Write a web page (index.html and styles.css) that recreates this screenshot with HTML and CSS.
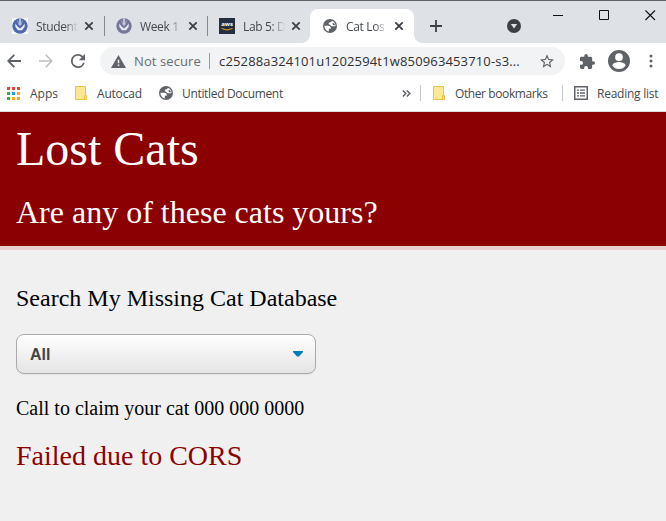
FILE: index.html
```html
<!DOCTYPE html>
<html lang="en">
<head>
<meta charset="utf-8">
<title>Cat Lost and Found</title>
<link rel="stylesheet" href="styles.css">
</head>
<body>
<svg class="defs" width="0" height="0">
  <symbol id="close" viewBox="0 0 10 10"><path d="M1.300 1.300l7.400 7.400M8.700 1.300L1.300 8.700" stroke="#3c4043" stroke-width="1.800"/></symbol>
  <symbol id="globe" viewBox="0 0 20 20"><circle cx="10" cy="10" r="10" fill="#5f6368"/><path d="M2 9.800h5.500c2.600 0 4 1.500 3.700 4.300H8.300v3.700C4.500 17 2 14 2 9.800z" fill="#fff"/><path d="M12.500 2.500C15.800 3.600 18 6.500 18 10c-1 .7-3.500.6-5 .3-1.800-.4-2.200-2-3.800-2.500-1.500-.5-1.500-2.500.2-2.800 1.600-.2 2.900-.6 3.100-2.500z" fill="#fff"/><path d="M14 5.500c1.500.4 3 2 3.500 3.500-1.500 0-3-.2-3.600-1.200-.5-.8-.4-1.500.1-2.300z" fill="#5f6368"/></symbol>
  <symbol id="logo" viewBox="0 0 16 16"><circle cx="8" cy="8" r="7.700" fill="currentColor"/><path d="M3.300 5.500v3.200L6 12.300h4l2.700-3.600V5.500L10.500 8.500 8 10.500 5.500 8.500z" fill="#e9ecf7"/><path d="M8 .5v7" stroke="#eef0fa" stroke-width="1.300"/><path d="M5.500 2.500L7 7M10.500 2.500L9 7" stroke="#aab5da" stroke-width=".8"/></symbol>
  <symbol id="folder" viewBox="0 0 12 14"><path d="M.5.500h10v9h1v4H.5z" fill="#ffe793" stroke="#e9c34a"/><path d="M9.500 13V9.700h2" fill="none" stroke="#e9c34a"/></symbol>
</svg>

<div class="tabstrip">
  <div class="tab first"><svg class="favicon boxed blue"><use href="#logo"/></svg><span class="title">Student</span><svg class="close"><use href="#close"/></svg></div>
  <div class="tab"><svg class="favicon grey"><use href="#logo"/></svg><span class="title">Week 1</span><svg class="close"><use href="#close"/></svg></div>
  <div class="tab last"><span class="favicon aws">aws<svg viewBox="0 0 12 3"><path d="M.5.500Q6 3.500 11.500.500" fill="none" stroke="#f59b23"/></svg></span><span class="title">Lab 5: D</span><svg class="close"><use href="#close"/></svg></div>
  <div class="tab active"><svg class="favicon globe"><use href="#globe"/></svg><span class="title">Cat Los</span><svg class="close"><use href="#close"/></svg></div>
  <svg class="newtab" viewBox="0 0 12 12"><path d="M6 0v12M0 6h12" stroke="#3c4043" stroke-width="1.800"/></svg>
  <svg class="search-tabs" viewBox="0 0 14 14"><circle cx="7" cy="7" r="7" fill="#3c4043"/><path d="M3.800 5h6.400L7 9.500z" fill="#dee1e6"/></svg>
  <div class="window-controls">
    <svg viewBox="0 0 11 11"><path d="M0 5.500h10" stroke="#111"/></svg>
    <svg viewBox="0 0 11 11"><path d="M.5.500h9v9h-9z" fill="none" stroke="#111"/></svg>
    <svg viewBox="0 0 11 11"><path d="M.5.500l9.500 9.500M10 .5L.5 10" stroke="#111" stroke-width="1.100"/></svg>
  </div>
</div>

<div class="toolbar">
  <svg class="back" viewBox="0 0 14 14"><path d="M14 7H1.500M7.300.800L1.200 7l6.100 6.200" fill="none" stroke="#5f6368" stroke-width="1.800"/></svg>
  <svg class="forward" viewBox="0 0 14 14"><path d="M0 7h12.500M6.700.800L12.800 7l-6.100 6.200" fill="none" stroke="#bdbfc1" stroke-width="1.600"/></svg>
  <svg class="reload" viewBox="4 4 16 16"><path fill="#5f6368" d="M17.650 6.350A7.960 7.960 0 0 0 12 4a8 8 0 1 0 7.730 10h-2.080A6 6 0 1 1 12 6c1.660 0 3.140.690 4.220 1.780L13 11h7V4z"/></svg>
  <div class="address">
    <svg class="warning" viewBox="0 0 15 13"><path d="M7.500 0L15 13H0z" fill="#5f6368"/><path d="M7.500 4.700v3.600M7.500 9.500v1.600" stroke="#f1f3f4" stroke-width="1.500"/></svg>
    <span class="security">Not secure</span>
    <span class="url">c25288a324101u1202594t1w850963453710-s3...</span>
    <svg class="star" viewBox="2 2 20 19"><path fill="#5f6368" d="M22 9.240l-7.190-.620L12 2 9.190 8.630 2 9.240l5.460 4.730L5.820 21 12 17.270 18.180 21l-1.630-7.030zM12 15.400l-3.760 2.270 1-4.280-3.320-2.880 4.380-.380L12 6.100l1.710 4.040 4.380.380-3.320 2.880 1 4.280z"/></svg>
  </div>
  <svg class="puzzle" viewBox="2 1 21 21"><path fill="#5f6368" d="M20.500 11H19V7a2 2 0 0 0-2-2h-4V3.500a2.500 2.500 0 0 0-5 0V5H4a2 2 0 0 0-2 2v3.800h1.500a2.700 2.700 0 0 1 0 5.400H2V20c0 1.100.9 2 2 2h3.800v-1.500a2.700 2.700 0 0 1 5.400 0V22H17a2 2 0 0 0 2-2v-4h1.500a2.500 2.500 0 0 0 0-5z"/></svg>
  <svg class="profile" viewBox="2 2 20 20"><path fill="#5f6368" d="M12 2a10 10 0 1 0 0 20 10 10 0 0 0 0-20zm0 3a3.500 3.500 0 1 1 0 7 3.500 3.500 0 0 1 0-7zm0 14.200A7.200 7.200 0 0 1 6 16c0-2 4-3.100 6-3.100s6 1.100 6 3.100a7.200 7.200 0 0 1-6 3.200z"/></svg>
  <svg class="more" viewBox="0 0 4 14"><g fill="#5f6368"><circle cx="2" cy="2" r="1.500"/><circle cx="2" cy="7" r="1.500"/><circle cx="2" cy="12" r="1.500"/></g></svg>
</div>

<div class="bookmarks">
  <svg class="apps" viewBox="0 0 13 13"><path fill="#ea4335" d="M0 0h3v3H0zM5 0h3v3H5zM10 0h3v3h-3z"/><path fill="#34a853" d="M0 5h3v3H0zM0 10h3v3H0z"/><path fill="#1a9cf0" d="M5 5h3v3H5z"/><path fill="#fbad08" d="M10 5h3v3h-3zM5 10h3v3H5zM10 10h3v3h-3z"/></svg>
  <span class="label apps-label">Apps</span>
  <svg class="folder"><use href="#folder"/></svg>
  <span class="label autocad">Autocad</span>
  <svg class="globe"><use href="#globe"/></svg>
  <span class="label untitled">Untitled Document</span>
  <svg class="overflow" viewBox="0 0 9 7"><path d="M.8.500l3 3-3 3M4.800.500l3 3-3 3" fill="none" stroke="#5f6368" stroke-width="1.500"/></svg>
  <div class="group other">
    <svg class="folder"><use href="#folder"/></svg>
    <span class="label">Other bookmarks</span>
  </div>
  <div class="group reading">
    <svg class="list" viewBox="0 0 14 14"><path d="M.75.750h12.500v12.500H.75z" fill="none" stroke="#5f6368" stroke-width="1.500"/><path d="M3 4.200h2M6 4.200h5M3 7h2M6 7h5M3 9.800h2M6 9.800h5" stroke="#5f6368" stroke-width="1.300"/></svg>
    <span class="label">Reading list</span>
  </div>
</div>

<header class="hero">
  <h1>Lost Cats</h1>
  <h2>Are any of these cats yours?</h2>
</header>
<main>
  <h3>Search My Missing Cat Database</h3>
  <div class="select" role="combobox"><span>All</span><svg viewBox="0 0 10 6"><path d="M0 0h10v1L6 5.500H4L0 1z" fill="#007db8"/></svg></div>
  <p class="call">Call to claim your cat 000 000 0000</p>
  <p class="error">Failed due to CORS</p>
</main>
</body>
</html>
```
FILE: styles.css
```css
* { box-sizing: border-box; }
html, body { margin: 0; height: 100%; overflow: hidden; }
body {
  background: #f0f0f0;
  font-family: "Liberation Serif", "Times New Roman", serif;
  color: #000;
}
svg { display: block; flex: none; }
.defs { position: absolute; }

.tabstrip, .toolbar, .bookmarks {
  display: flex;
  align-items: center;
  font-family: "Open Sans", "Noto Sans", sans-serif;
  font-size: 12px;
  white-space: nowrap;
}

/* Tab strip */
.tabstrip {
  height: 43px;
  padding-top: 9px;
  background: #dee1e6;
  box-shadow: inset 0 1px #5f6368;
}
.tab {
  display: flex;
  align-items: center;
  width: 103px;
  height: 34px;
  padding-left: 12px;
  background: linear-gradient(#85888c, #85888c) right 7px / 1px 20px no-repeat;
  flex: none;
}
.tab.first { width: 105px; }
.tab.last { background: none; width: 102px; padding-left: 11px; }
.tab:nth-child(2) { padding-left: 11px; }
.tab.active {
  position: relative;
  width: 104px;
  padding-left: 13px;
  background: #fff;
  border-radius: 8px 8px 0 0;
}
.tab.active::before, .tab.active::after {
  content: "";
  position: absolute;
  bottom: 0;
  width: 8px;
  height: 8px;
}
.tab.active::before { left: -8px; background: radial-gradient(circle at 0 0, #dee1e6 7.500px, #fff 8px); }
.tab.active::after { right: -8px; background: radial-gradient(circle at 100% 0, #dee1e6 7.500px, #fff 8px); }
.favicon { width: 16px; height: 16px; flex: none; }
.active .favicon { width: 14px; height: 14px; margin-right: 1px; }
.boxed { background: #f7f8fa; }
.blue { color: #5068aa; }
.grey { color: #777799; }
.aws {
  background: #232f3e;
  color: #fff;
  font: bold 6px/7px "Open Sans", sans-serif;
  text-align: center;
  padding-top: 3px;
}
.aws svg { width: 12px; height: 3px; margin: 0 auto; }
.title {
  width: 42px;
  margin: 0 6px 0 8px;
  color: #45494d;
  letter-spacing: -0.350px;
  -webkit-mask-image: linear-gradient(90deg, #000 68%, transparent);
  mask-image: linear-gradient(90deg, #000 68%, transparent);
}
.close { width: 10px; height: 10px; }
.newtab { width: 12px; height: 12px; margin-left: 16px; }
.search-tabs { width: 14px; height: 14px; margin-left: 65px; }
.window-controls { display: flex; gap: 35px; margin: -22px 0 0 32px; }
.window-controls svg { width: 11px; height: 11px; }

/* Navigation and address */
.toolbar { height: 36px; background: #fff; }
.back { width: 14px; height: 14px; margin-left: 7px; }
.forward { width: 14px; height: 14px; margin-left: 18px; }
.reload { width: 14px; height: 14px; margin-left: 18px; }
.address {
  display: flex;
  align-items: center;
  width: 465px;
  height: 28px;
  margin-left: 15px;
  padding-left: 11px;
  border-radius: 14px;
  background: #f1f3f4;
  font-size: 13px;
}
.warning { width: 15px; height: 13px; }
.security {
  width: 75px;
  margin-left: 8px;
  color: #696d71;
  letter-spacing: 0.100px;
}
.url {
  width: 311px;
  padding-left: 9px;
  border-left: 1px solid #9b9ea1;
  line-height: 16px;
  color: #303134;
  letter-spacing: 0.150px;
}
.star { width: 14px; height: 14px; margin-left: 20px; }
.puzzle { width: 15px; height: 15px; margin-left: 15px; }
.profile { width: 22px; height: 22px; margin-left: 13px; }
.more { width: 4px; height: 14px; margin-left: 19px; }

/* Bookmarks */
.bookmarks {
  height: 33px;
  padding-bottom: 4px;
  background: #fff;
  border-bottom: 1px solid #dadce0;
  color: #45494d;
}
.apps { width: 13px; height: 13px; margin-left: 7px; }
.apps-label { width: 45px; margin-left: 10px; }
.folder { width: 12px; height: 14px; }
.autocad { width: 62px; margin-left: 10px; letter-spacing: -0.200px; }
.bookmarks .globe { width: 14px; height: 14px; }
.untitled { width: 220px; margin-left: 9px; letter-spacing: -0.330px; }
.overflow { width: 9px; height: 7px; }
.group {
  display: flex;
  align-items: center;
  height: 16px;
  padding-left: 12px;
  border-left: 1px solid #c5c8cc;
}
.group .label { margin-left: 10px; }
.other { width: 142px; margin-left: 9px; letter-spacing: -0.400px; }
.reading { padding-left: 11px; letter-spacing: -0.250px; }
.reading .label { margin-left: 9px; }
.list { width: 14px; height: 14px; }

/* Page */
h1, h2, h3, p { margin: 0; font-weight: normal; }
.hero {
  height: 138px;
  padding: 9px 16px 0;
  background: #8b0000;
  border-bottom: 4px solid #e8d0d0;
  color: #fff;
}
h1 { font-size: 48px; line-height: 55px; }
h2 { margin-top: 18px; font-size: 32px; line-height: 37px; }
main { padding: 34px 16px 0; }
h3 { font-size: 24px; line-height: 28px; }
.select {
  display: flex;
  align-items: center;
  justify-content: space-between;
  width: 300px;
  height: 40px;
  margin-top: 22px;
  padding: 0 12px 0 13px;
  border: 1px solid #aaa;
  border-radius: 8px;
  background: linear-gradient(#fff, #e4e4e4);
  box-shadow: 0 1px 1px rgba(0, 0, 0, 0.060);
  color: #444;
  font: bold 16px/20px "Liberation Sans", Arial, sans-serif;
}
.select span { padding-top: 1px; }
.select svg { width: 10px; height: 6px; }
.call { margin-top: 23px; font-size: 20px; line-height: 23px; }
.error { margin-top: 20px; color: #8b0000; font-size: 28px; line-height: 32px; }
```
